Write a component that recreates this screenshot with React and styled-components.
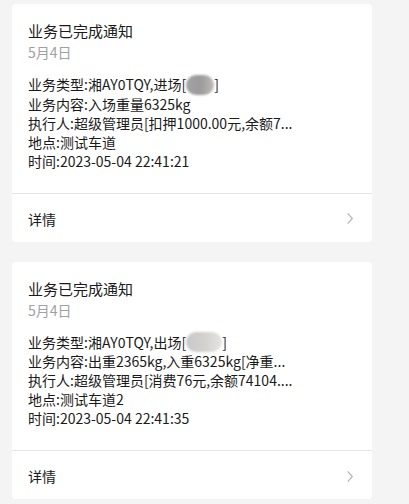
import React from "react";
import styled, { createGlobalStyle } from "styled-components";

const GlobalStyle = createGlobalStyle`
  html, body {
    margin: 0;
    padding: 0;
    background: #f4f4f4;
  }
  body {
    font-family: "Noto Sans CJK SC", "Noto Sans", sans-serif;
    color: #1a1a1a;
  }
`;

const notices = [
  {
    id: 1,
    action: "进场",
    blur: "light",
    lines: [
      "业务内容:入场重量6325kg",
      "执行人:超级管理员[扣押1000.00元,余额7...",
      "地点:测试车道",
      "时间:2023-05-04 22:41:21",
    ],
  },
  {
    id: 2,
    action: "出场",
    blur: "pale",
    lines: [
      "业务内容:出重2365kg,入重6325kg[净重...",
      "执行人:超级管理员[消费76元,余额74104....",
      "地点:测试车道2",
      "时间:2023-05-04 22:41:35",
    ],
  },
];

export default function App() {
  return (
    <>
      <GlobalStyle />
      <List>
        {notices.map((n) => (
          <Card key={n.id}>
            <Body>
              <Title>业务已完成通知</Title>
              <DateText>5月4日</DateText>
              <Lines>
                <Line>
                  业务类型:湘AY0TQY,{n.action}[<Blur $tone={n.blur} />]
                </Line>
                {n.lines.map((l) => (
                  <Line key={l}>{l}</Line>
                ))}
              </Lines>
            </Body>
            <Footer>
              <span>详情</span>
              <Chevron viewBox="0 0 8 14" aria-hidden="true">
                <path d="M1.5 1.5 L6.5 7 L1.5 12.5" />
              </Chevron>
            </Footer>
          </Card>
        ))}
      </List>
    </>
  );
}

const List = styled.div`
  display: flex;
  flex-direction: column;
  gap: 20px;
  padding: 4px 37px 4px 12px;
`;

const Card = styled.section`
  background: #fff;
  border-radius: 4px;
  overflow: hidden;
`;

const Body = styled.div`
  padding: 16px 16px 22px;
  border-bottom: 1px solid #e5e5e5;
`;

const Title = styled.h3`
  margin: 0;
  font-size: 15px;
  font-weight: 400;
  line-height: 22px;
  color: #1a1a1a;
`;

const DateText = styled.div`
  font-size: 14px;
  line-height: 20px;
  color: #a0a0a0;
`;

const Lines = styled.div`
  margin-top: 13px;
`;

const Line = styled.div`
  font-size: 14px;
  line-height: 19px;
  white-space: nowrap;
`;

const Blur = styled.span`
  display: inline-block;
  vertical-align: middle;
  width: ${(p) => (p.$tone === "pale" ? "36px" : "28px")};
  height: 20px;
  margin-top: -3px;
  border-radius: 10px;
  background: ${(p) =>
    p.$tone === "pale"
      ? "linear-gradient(90deg, #c9c9c9 0%, #d3d1ce 50%, #e6e4e1 100%)"
      : "linear-gradient(90deg, #a3a3a3 0%, #9b9b9b 50%, #bdb9b4 100%)"};
  filter: blur(1px);
`;

const Footer = styled.div`
  display: flex;
  align-items: center;
  justify-content: space-between;
  height: 46px;
  padding: 2px 16px 0;
  font-size: 14px;
  color: #1a1a1a;
`;

const Chevron = styled.svg`
  width: 8px;
  height: 13px;
  margin-right: 2px;
  fill: none;
  stroke: #b5b5b5;
  stroke-width: 1.3;
`;
